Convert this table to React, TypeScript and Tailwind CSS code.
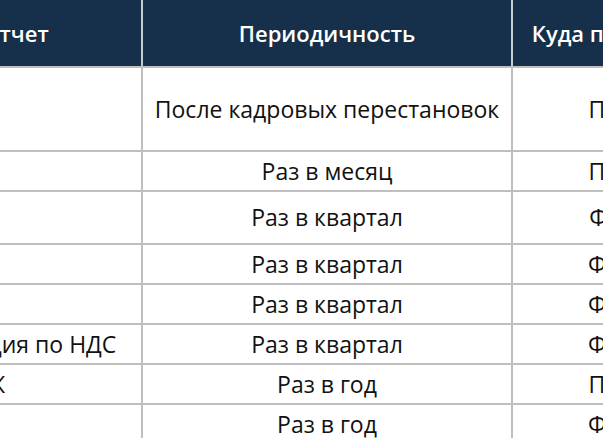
import React from "react";

const rows = [
  { report: "ЕФС-1", period: "После кадровых перестановок", to: "ПФР", h: "h-[84px]" },
  { report: "СЗВ-М", period: "Раз в месяц", to: "ПФР", h: "h-[40px]" },
  { report: "4-ФСС", period: "Раз в квартал", to: "ФСС", h: "h-[53px]" },
  { report: "РСВ", period: "Раз в квартал", to: "ФНС", h: "h-[40px]" },
  { report: "ЕНС", period: "Раз в квартал", to: "ФНС", h: "h-[40px]" },
  { report: "Декларация по НДС", period: "Раз в квартал", to: "ФНС", h: "h-[40px]" },
  { report: "СЗВ-СТАЖ", period: "Раз в год", to: "ПФР", h: "h-[40px]" },
  { report: "УСН", period: "Раз в год", to: "ФНС", h: "h-[40px]" },
];

export default function App() {
  return (
    <div
      className="w-[603px] h-[438px] overflow-hidden bg-white"
      style={{ fontFamily: "'Open Sans', sans-serif" }}
    >
      <div className="-ml-[110px] w-[823px]">
        <div className="grid grid-cols-[253px_370px_200px] h-[68px] bg-[#16304b] text-white text-[22px] font-semibold border-b-2 border-[#bfbfbf]">
          <div className="flex items-center justify-center border-r-2 border-[#c3cbd3]">Отчет</div>
          <div className="flex items-center justify-center border-r-2 border-[#c3cbd3]">Периодичность</div>
          <div className="flex items-center justify-center">Куда подавать</div>
        </div>
        {rows.map((r) => (
          <div
            key={r.report}
            className={`grid grid-cols-[253px_370px_200px] ${r.h} text-[23px] text-[#111] border-b-2 border-[#bfbfbf]`}
          >
            <div className="flex items-center pl-[4px] border-r-2 border-[#bfbfbf] whitespace-nowrap overflow-hidden">
              {r.report}
            </div>
            <div className="flex items-center justify-center border-r-2 border-[#bfbfbf]">{r.period}</div>
            <div className="flex items-center justify-center">{r.to}</div>
          </div>
        ))}
      </div>
    </div>
  );
}
